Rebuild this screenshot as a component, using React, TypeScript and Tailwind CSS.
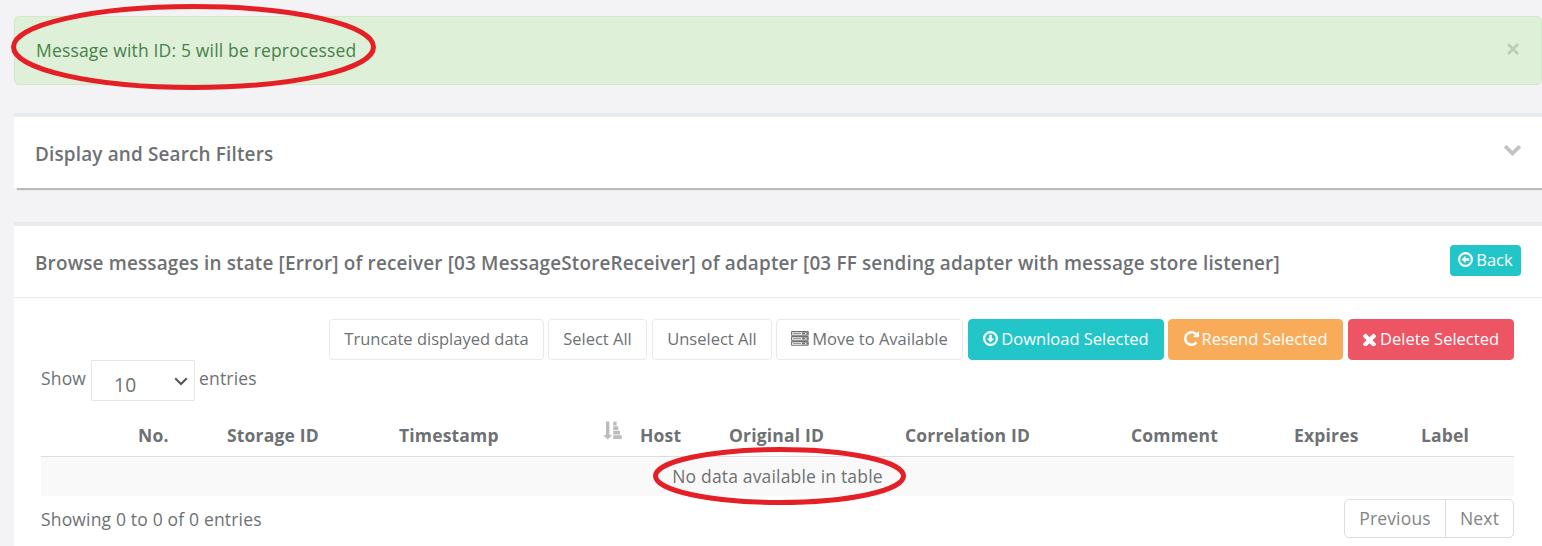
import type { ReactNode } from "react";

const TIMES =
  "M1490 1322q0 40-28 68l-136 136q-28 28-68 28t-68-28l-294-294-294 294q-28 28-68 28t-68-28l-136-136q-28-28-28-68t28-68l294-294-294-294q-28-28-28-68t28-68l136-136q28-28 68-28t68 28l294 294 294-294q28-28 68-28t68 28l136 136q28 28 28 68t-28 68l-294 294 294 294q28 28 28 68z";
const CHEVRON =
  "M1683 808l-742 741q-19 19-45 19t-45-19l-742-741q-19-19-19-45.5t19-45.5l166-165q19-19 45-19t45 19l531 531 531-531q19-19 45-19t45 19l166 165q19 19 19 45.5t-19 45.5z";
const REPEAT =
  "M1664 256v448q0 26-19 45t-45 19h-448q-42 0-59-40-17-39 14-69l138-138q-148-137-349-137-104 0-198.5 40.5t-163.5 109.5-109.5 163.5-40.5 198.5 40.5 198.5 109.5 163.5 163.5 109.5 198.5 40.5q119 0 225-52t179-147q7-10 23-12 15 0 25 9l137 138q9 8 9.5 20.5t-7.5 22.5q-109 132-264 204.5t-327 72.5q-156 0-298-61t-245-164-164-245-61-298 61-298 164-245 245-164 298-61q147 0 284.5 55.5t244.5 156.5l130-129q29-31 70-14 39 17 39 59z";

function CircleArrow({ className }: { className: string }) {
  return (
    <svg viewBox="128 128 1536 1536" className={className}>
      <circle cx="896" cy="896" r="656" fill="none" stroke="currentColor" strokeWidth="224" />
      <path
        fill="currentColor"
        d="M1280 800v192q0 32-32 32H896v192q0 32-32 32-12 0-24-10L521 919q-9-9-9-23t9-23l320-320q9-9 23-9 32 0 32 32v192h352q32 0 32 32z"
      />
    </svg>
  );
}

function ServerIcon() {
  return (
    <svg viewBox="0 0 18 15" className="mb-px h-[15px] w-[18px] shrink-0" fill="none" stroke="currentColor">
      {[0, 5, 10].map((y) => (
        <g key={y}>
          <rect x="0.6" y={y + 0.6} width="16.6" height="3.6" rx="0.4" strokeWidth="1.1" />
          <path d={`M2 ${y + 2.4}h8`} strokeWidth="0.8" />
          <path d={`M11 ${y + 2.4}h6`} strokeWidth="2" />
          <path d={`M14 ${y + 2.4}h1.4`} strokeWidth="1" stroke="white" />
        </g>
      ))}
    </svg>
  );
}

function SortIcon() {
  return (
    <svg viewBox="0 0 19 19" className="-mt-0.5 mb-0.5 h-[19px] w-[19px]" fill="#bcbcbc">
      <path d="M3 0.5h3.4v13.4h2.8L4.7 18.6 0.2 13.9H3zM10.2 0.8h3.4v3.8h-3.4zM10.2 5.3h5v3.8h-5zM10.2 9.8h6.8v3.8h-6.8zM10.2 14.3h8.6v3.8h-8.6z" />
    </svg>
  );
}

function Button({ className, children }: { className: string; children: ReactNode }) {
  return (
    <button
      className={`flex h-[41px] shrink-0 items-center justify-center gap-[3px] rounded-[4px] border pb-0.5 text-[16.5px] tracking-normal whitespace-nowrap ${className}`}
    >
      {children}
    </button>
  );
}

const columns = [
  { name: "", width: "w-[89px]" },
  { name: "No.", width: "w-[89px]" },
  { name: "Storage ID", width: "w-[172px]" },
  { name: "Timestamp", width: "w-[241px]", sorted: true },
  { name: "Host", width: "w-[89px]" },
  { name: "Original ID", width: "w-[176px]" },
  { name: "Correlation ID", width: "w-[226px]" },
  { name: "Comment", width: "w-[163px]" },
  { name: "Expires", width: "w-[127px]" },
  { name: "Label", width: "w-[101px]" },
];

export default function App() {
  return (
    <div className="relative h-[546px] w-full overflow-hidden bg-[#f3f3f5] pt-4 pl-3.5 font-['Open_Sans',sans-serif] text-[17.5px] leading-[25px] tracking-[0.17px] text-[#6e7173]">
      <div className="flex h-[69px] items-center justify-between rounded-[5px] border border-[#d0e9c6] bg-[#dff0d8] pr-[22px] pl-[21px] text-[#47804a]">
        <span>Message with ID: 5 will be reprocessed</span>
        <button aria-label="Close">
          <svg viewBox="0 0 12 12" className="mb-1 h-3 w-3" fill="none" stroke="#b9cfb3" strokeWidth="2.6">
            <path d="M1 1l10 10M11 1L1 11" />
          </svg>
        </button>
      </div>

      <section className="mt-7 flex h-[75px] justify-between border-t-4 border-[#e7eaec] bg-white pt-[25px] pr-[21px] pl-[21px] shadow-[3px_2px_1px_0_#b9bbbd]">
        <h5 className="text-[18.9px] font-semibold">Display and Search Filters</h5>
        <svg viewBox="90 525 1612 1050" className="mt-[3px] h-[11px] w-[17px]" fill="#c4c4c4">
          <path d={CHEVRON} />
        </svg>
      </section>

      <section className="mt-[34px] h-[330px] border-t-4 border-[#e7eaec] bg-white">
        <header className="flex h-[72px] items-start justify-between border-b border-[#e7eaec] pr-[21px] pl-[21px]">
          <h5 className="mt-[25px] text-[18.9px] font-semibold tracking-[0.17px] whitespace-nowrap">
            Browse messages in state [Error] of receiver [03 MessageStoreReceiver] of adapter [03 FF sending adapter with message store listener]
          </h5>
          <button className="mt-[19px] flex h-[31px] w-[71px] items-center justify-center gap-[3px] rounded-[4px] bg-[#23c6c8] pb-0.5 text-[16.5px] tracking-normal text-white">
            <CircleArrow className="h-[15px] w-[15px]" />
            Back
          </button>
        </header>

        <div className="pr-7 pl-[27px]">
          <div className="mt-[21px] flex justify-end">
            <Button className="mr-1 w-[215px] border-[#e7eaec]">Truncate displayed data</Button>
            <Button className="mr-[5px] w-[99px] border-[#e7eaec]">Select All</Button>
            <Button className="mr-1 w-[120px] border-[#e7eaec]">Unselect All</Button>
            <Button className="mr-[5px] w-[187px] border-[#e7eaec]">
              <ServerIcon />
              Move to Available
            </Button>
            <Button className="mr-1 w-[196px] border-[#23c6c8] bg-[#23c6c8] text-white">
              <CircleArrow className="h-[15px] w-[15px] -rotate-90" />
              Download Selected
            </Button>
            <Button className="mr-[5px] w-[175px] border-[#f8ac59] bg-[#f8ac59] text-white">
              <svg viewBox="128 128 1536 1536" className="h-[15px] w-[15px]" fill="currentColor">
                <path d={REPEAT} />
              </svg>
              Resend Selected
            </Button>
            <Button className="w-[166px] border-[#ed5565] bg-[#ed5565] text-white">
              <svg viewBox="302 302 1188 1188" className="mt-px mr-px h-[13px] w-[13px]" fill="currentColor">
                <path d={TIMES} />
              </svg>
              Delete Selected
            </Button>
          </div>

          <div className="flex h-[41px]">
            <span className="mt-1.5 w-[50px]">Show</span>
            <div className="flex w-[104px] justify-between rounded-[1px] border border-[#e5e6e7] pt-[11px] pr-[6px] pl-[22px] text-[19.2px]">
              <span>10</span>
              <svg viewBox="0 0 14 9" className="mt-[5px] h-[9px] w-[14px]" fill="none" stroke="#555" strokeWidth="2">
                <path d="M1.2 1.3 7 7l5.8-5.7" />
              </svg>
            </div>
            <span className="mt-1.5 ml-1">entries</span>
          </div>

          <table className="mt-[11px] w-[1473px] table-fixed border-collapse">
            <thead>
              <tr className="h-[44px] border-b border-[#dddddd]">
                {columns.map((c) => (
                  <th key={c.name} className={`${c.width} pt-[4px] pl-2 text-left align-middle font-bold whitespace-nowrap`}>
                    <div className="flex h-[25px] justify-between pr-[10px]">
                      {c.name}
                      {c.sorted && <SortIcon />}
                    </div>
                  </th>
                ))}
              </tr>
            </thead>
            <tbody>
              <tr className="h-[40px] bg-[#f9f9f9]">
                <td colSpan={10} className="pt-px text-center">
                  No data available in table
                </td>
              </tr>
            </tbody>
          </table>

          <div className="mt-[3px] flex justify-between">
            <span className="mt-2">Showing 0 to 0 of 0 entries</span>
            <div className="flex h-[39px] w-[170px] rounded-[5px] border border-[#dddddd] text-[#828486]">
              <button className="w-[101px] border-r border-[#dddddd]">Previous</button>
              <button className="flex-1">Next</button>
            </div>
          </div>
        </div>
      </section>

      <svg className="pointer-events-none absolute top-0 left-0 h-[546px] w-[1542px]" fill="none" stroke="#e51f26" strokeWidth="5">
        <ellipse cx="193.5" cy="47" rx="180" ry="40.5" />
        <ellipse cx="779.5" cy="476" rx="124" ry="26.5" />
      </svg>
    </div>
  );
}
